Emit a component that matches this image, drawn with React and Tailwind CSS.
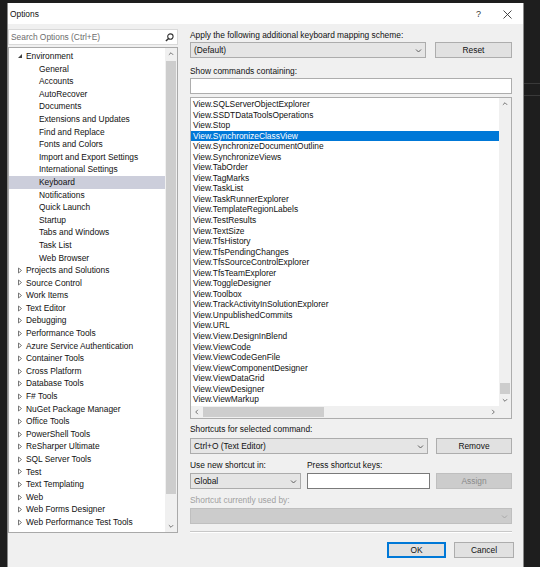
import React from 'react'

const treeItems = [
  { label: 'Environment', level: 0, open: true },
  { label: 'General', level: 1 },
  { label: 'Accounts', level: 1 },
  { label: 'AutoRecover', level: 1 },
  { label: 'Documents', level: 1 },
  { label: 'Extensions and Updates', level: 1 },
  { label: 'Find and Replace', level: 1 },
  { label: 'Fonts and Colors', level: 1 },
  { label: 'Import and Export Settings', level: 1 },
  { label: 'International Settings', level: 1 },
  { label: 'Keyboard', level: 1, selected: true },
  { label: 'Notifications', level: 1 },
  { label: 'Quick Launch', level: 1 },
  { label: 'Startup', level: 1 },
  { label: 'Tabs and Windows', level: 1 },
  { label: 'Task List', level: 1 },
  { label: 'Web Browser', level: 1 },
  { label: 'Projects and Solutions', level: 0 },
  { label: 'Source Control', level: 0 },
  { label: 'Work Items', level: 0 },
  { label: 'Text Editor', level: 0 },
  { label: 'Debugging', level: 0 },
  { label: 'Performance Tools', level: 0 },
  { label: 'Azure Service Authentication', level: 0 },
  { label: 'Container Tools', level: 0 },
  { label: 'Cross Platform', level: 0 },
  { label: 'Database Tools', level: 0 },
  { label: 'F# Tools', level: 0 },
  { label: 'NuGet Package Manager', level: 0 },
  { label: 'Office Tools', level: 0 },
  { label: 'PowerShell Tools', level: 0 },
  { label: 'ReSharper Ultimate', level: 0 },
  { label: 'SQL Server Tools', level: 0 },
  { label: 'Test', level: 0 },
  { label: 'Text Templating', level: 0 },
  { label: 'Web', level: 0 },
  { label: 'Web Forms Designer', level: 0 },
  { label: 'Web Performance Test Tools', level: 0 },
]

const commands = [
  'View.SQLServerObjectExplorer',
  'View.SSDTDataToolsOperations',
  'View.Stop',
  'View.SynchronizeClassView',
  'View.SynchronizeDocumentOutline',
  'View.SynchronizeViews',
  'View.TabOrder',
  'View.TagMarks',
  'View.TaskList',
  'View.TaskRunnerExplorer',
  'View.TemplateRegionLabels',
  'View.TestResults',
  'View.TextSize',
  'View.TfsHistory',
  'View.TfsPendingChanges',
  'View.TfsSourceControlExplorer',
  'View.TfsTeamExplorer',
  'View.ToggleDesigner',
  'View.Toolbox',
  'View.TrackActivityInSolutionExplorer',
  'View.UnpublishedCommits',
  'View.URL',
  'View.View.DesignInBlend',
  'View.ViewCode',
  'View.ViewCodeGenFile',
  'View.ViewComponentDesigner',
  'View.ViewDataGrid',
  'View.ViewDesigner',
  'View.ViewMarkup',
]

// small chevron used by dropdowns and scrollbars
const Chevron = ({ dir = 'down', color = '#606060', size = 7 }) => {
  const paths = {
    down: 'M1 2.5 L3.5 5 L6 2.5',
    up: 'M1 4.5 L3.5 2 L6 4.5',
    left: 'M4.5 1 L2 3.5 L4.5 6',
    right: 'M2.5 1 L5 3.5 L2.5 6',
  }
  return (
    <svg width={size} height={size} viewBox="0 0 7 7">
      <path d={paths[dir]} fill="none" stroke={color} strokeWidth="1" />
    </svg>
  )
}

const Dropdown = ({ value, width, disabled }) => (
  <div
    className={`h-[16px] ${width} flex items-center justify-between pl-[3px] pr-[3px] border ${
      disabled ? 'bg-[#cccccc] border-[#bfbfbf]' : 'bg-[#e5e5e5] border-[#acacac]'
    }`}
  >
    <span className="text-[8.4px] leading-none text-[#111]">{value}</span>
    <Chevron color={disabled ? '#a8a8a8' : '#606060'} />
  </div>
)

const Button = ({ children, width = 'w-[77px]', disabled, isDefault }) => (
  <div
    className={`h-[16px] ${width} flex items-center justify-center text-[8.4px] leading-none border ${
      disabled
        ? 'bg-[#cccccc] border-[#bfbfbf] text-[#8a8a8a]'
        : isDefault
        ? 'bg-[#e1e1e1] border-[#0078d7] outline outline-1 outline-[#0078d7] -outline-offset-2 text-[#111]'
        : 'bg-[#e1e1e1] border-[#adadad] text-[#111]'
    }`}
  >
    {children}
  </div>
)

const TreeArrow = ({ open }) =>
  open ? (
    <svg width="6" height="6" viewBox="0 0 6 6">
      <path d="M5 1 L5 5 L1 5 Z" fill="#404040" />
    </svg>
  ) : (
    <svg width="6" height="7" viewBox="0 0 6 7">
      <path d="M1.5 1 L4.5 3.5 L1.5 6 Z" fill="none" stroke="#6a6a6a" strokeWidth="0.9" />
    </svg>
  )

export default function App() {
  return (
    <div
      className="w-[540px] h-[567px] bg-[#1e1e1e] overflow-hidden flex pt-[3px] pl-[7px]"
      style={{ fontFamily: '"Liberation Sans", Arial, sans-serif' }}
    >
      {/* Dialog */}
      <div className="w-[517px] h-[570px] bg-[#f0f0f0] border-x border-[#8a8a8a] flex flex-col shrink-0">
        {/* Title bar */}
        <div className="h-[21px] bg-white flex items-center justify-between pl-[2px] pr-[11px] shrink-0">
          <span className="text-[8.4px] text-[#111] mt-[2px]">Options</span>
          <div className="flex items-center gap-[22px] mt-[2px]">
            <span className="text-[9px] text-[#333]">?</span>
            <svg width="9" height="9" viewBox="0 0 9 9">
              <path d="M0.5 0.5 L8.5 8.5 M8.5 0.5 L0.5 8.5" stroke="#333" strokeWidth="0.9" />
            </svg>
          </div>
        </div>

        <div className="flex">
          {/* Left column */}
          <div className="w-[170px] flex flex-col shrink-0">
            <div className="mt-[5px] h-[16px] bg-white border border-[#d9d9d9] flex items-center justify-between pl-[2px] pr-[3px]">
              <span className="text-[8.4px] text-[#6d6d6d] leading-none">Search Options (Ctrl+E)</span>
              <svg width="9" height="9" viewBox="0 0 10 10">
                <circle cx="6" cy="4" r="3" fill="none" stroke="#333" strokeWidth="1.2" />
                <path d="M4 6 L1 9" stroke="#333" strokeWidth="1.6" />
              </svg>
            </div>
            <div className="mt-[2px] h-[486px] bg-white border border-[#a9a9a9] flex">
              <div className="flex-1 pt-[2px] overflow-hidden">
                {treeItems.map((t) => (
                  <div
                    key={t.label}
                    className={`h-[12.6px] flex items-center text-[8.4px] text-[#111] whitespace-nowrap ${
                      t.selected ? 'bg-[#cccedb]' : ''
                    }`}
                  >
                    {t.level === 0 ? (
                      <>
                        <span className="w-[17px] flex justify-end pr-[3px]">
                          <TreeArrow open={t.open} />
                        </span>
                        <span>{t.label}</span>
                      </>
                    ) : (
                      <span className="pl-[30px]">{t.label}</span>
                    )}
                  </div>
                ))}
              </div>
              {/* scrollbar */}
              <div className="w-[12px] bg-[#f0f0f0] flex flex-col items-center">
                <div className="h-[12px] flex items-center justify-center">
                  <Chevron dir="up" color="#606060" size={6} />
                </div>
                <div className="w-[10px] h-[433px] mt-[1px] bg-[#cdcdcd]" />
                <div className="flex-1" />
                <div className="h-[12px] flex items-center justify-center">
                  <Chevron dir="down" color="#606060" size={6} />
                </div>
              </div>
            </div>
          </div>

          {/* Right column */}
          <div className="w-[322px] ml-[12px] flex flex-col text-[8.4px] text-[#111]">
            <div className="h-[12px] mt-[5px] flex items-center">Apply the following additional keyboard mapping scheme:</div>
            <div className="mt-[1px] flex justify-between">
              <Dropdown value="(Default)" width="w-[236px]" />
              <Button>Reset</Button>
            </div>
            <div className="h-[12px] mt-[7px] flex items-center">Show commands containing:</div>
            <div className="mt-[1px] h-[16px] bg-white border border-[#adadad]" />
            {/* Command list */}
            <div className="mt-[3px] h-[322px] bg-white border border-[#adadad] flex flex-col">
              <div className="flex flex-1 overflow-hidden">
                <div className="flex-1 overflow-hidden pt-[1px]">
                  {commands.map((c) => (
                    <div
                      key={c}
                      className={`h-[10.55px] flex items-center pl-[2px] whitespace-nowrap ${
                        c === 'View.SynchronizeClassView' ? 'bg-[#0078d7] text-white' : ''
                      }`}
                    >
                      {c}
                    </div>
                  ))}
                </div>
                <div className="w-[12px] bg-[#f0f0f0] flex flex-col items-center">
                  <div className="h-[12px] flex items-center justify-center">
                    <Chevron dir="up" size={6} />
                  </div>
                  <div className="flex-1" />
                  <div className="w-[10px] h-[11px] bg-[#cdcdcd]" />
                  <div className="h-[12px] flex items-center justify-center">
                    <Chevron dir="down" size={6} />
                  </div>
                </div>
              </div>
              <div className="h-[12px] bg-[#f0f0f0] flex items-center shrink-0">
                <div className="w-[12px] flex justify-center">
                  <Chevron dir="left" size={6} />
                </div>
                <div className="w-[121px] h-[10px] bg-[#cdcdcd]" />
                <div className="flex-1" />
                <div className="w-[12px] flex justify-center">
                  <Chevron dir="right" size={6} />
                </div>
                <div className="w-[12px]" />
              </div>
            </div>
            <div className="h-[12px] mt-[4px] flex items-center">Shortcuts for selected command:</div>
            <div className="mt-[3px] flex justify-between">
              <Dropdown value="Ctrl+O (Text Editor)" width="w-[238px]" />
              <Button width="w-[76px]">Remove</Button>
            </div>
            <div className="h-[12px] mt-[5px] flex">
              <span className="w-[117px]">Use new shortcut in:</span>
              <span>Press shortcut keys:</span>
            </div>
            <div className="mt-[2px] flex items-center">
              <Dropdown value="Global" width="w-[111px]" />
              <div className="ml-[6px] w-[123px] h-[16px] bg-white border border-[#7a7a7a]" />
              <div className="ml-auto">
                <Button width="w-[76px]" disabled>
                  Assign
                </Button>
              </div>
            </div>
            <div className="h-[12px] mt-[5px] flex items-center text-[#a0a0a0]">Shortcut currently used by:</div>
            <div className="mt-[2px]">
              <Dropdown value="" width="w-[322px]" disabled />
            </div>
            <div className="mt-[7px] h-px bg-[#c8c8c8] border-b border-white box-content" />
            <div className="mt-[9px] flex justify-end gap-[8px] -mr-[2px]">
              <Button width="w-[59px]" isDefault>
                OK
              </Button>
              <Button width="w-[60px]">Cancel</Button>
            </div>
          </div>
        </div>
      </div>

      {/* dark background to the right */}
      <div className="flex-1 flex flex-col">
        <div className="mt-[80px] h-px bg-[#3a3a3a]" />
        <div className="mt-[11px] h-px bg-[#3a3a3a]" />
      </div>
    </div>
  )
}
